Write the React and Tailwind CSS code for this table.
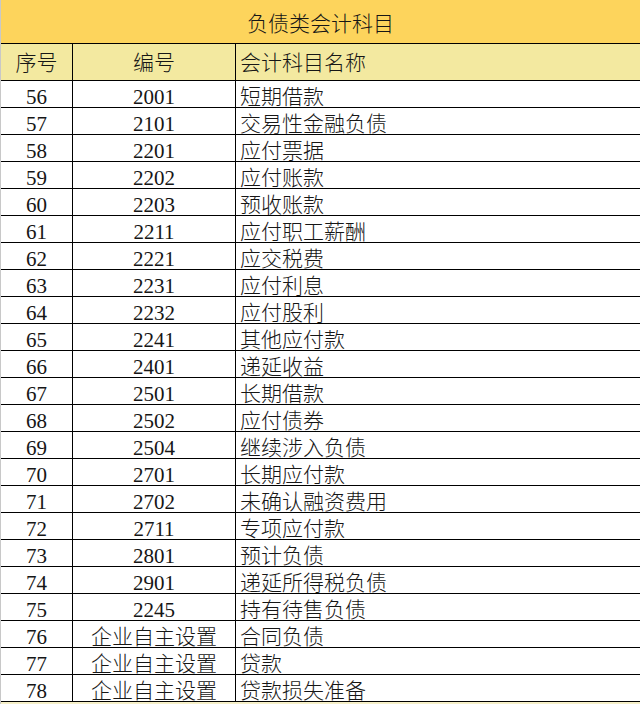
const rows = [
  ["56", "2001", "短期借款"],
  ["57", "2101", "交易性金融负债"],
  ["58", "2201", "应付票据"],
  ["59", "2202", "应付账款"],
  ["60", "2203", "预收账款"],
  ["61", "2211", "应付职工薪酬"],
  ["62", "2221", "应交税费"],
  ["63", "2231", "应付利息"],
  ["64", "2232", "应付股利"],
  ["65", "2241", "其他应付款"],
  ["66", "2401", "递延收益"],
  ["67", "2501", "长期借款"],
  ["68", "2502", "应付债券"],
  ["69", "2504", "继续涉入负债"],
  ["70", "2701", "长期应付款"],
  ["71", "2702", "未确认融资费用"],
  ["72", "2711", "专项应付款"],
  ["73", "2801", "预计负债"],
  ["74", "2901", "递延所得税负债"],
  ["75", "2245", "持有待售负债"],
  ["76", "企业自主设置", "合同负债"],
  ["77", "企业自主设置", "贷款"],
  ["78", "企业自主设置", "贷款损失准备"],
];

const font = {
  fontFamily: '"Liberation Serif", "Noto Sans CJK SC", serif',
};

export default function App() {
  return (
    <div
      className="w-[640px] h-[704px] overflow-hidden bg-white text-[21px] leading-[20px] font-light text-[#161616] border-l border-[#c8c8c8]"
      style={font}
    >
      {/* title */}
      <div className="h-[44px] bg-[#fdd45c] border-b border-black flex items-end justify-center pb-[9px]">
        负债类会计科目
      </div>

      {/* header */}
      <div className="h-[37px] bg-[#f3e9a0] border-b border-black grid grid-cols-[72px_163px_1fr]">
        <div className="border-r border-black flex items-end justify-center pb-[7px]">序号</div>
        <div className="border-r border-black flex items-end justify-center pb-[7px]">编号</div>
        <div className="flex items-end pl-[4px] pb-[7px]">会计科目名称</div>
      </div>

      {rows.map(([no, code, name]) => (
        <div key={no} className="h-[27px] border-b border-black grid grid-cols-[72px_163px_1fr]">
          <div className="border-r border-black flex items-end justify-center">{no}</div>
          <div className="border-r border-black flex items-end justify-center">{code}</div>
          <div className="flex items-end pl-[4px]">{name}</div>
        </div>
      ))}

      <div className="h-[10px] bg-[#f6f0c8]" />
    </div>
  );
}
